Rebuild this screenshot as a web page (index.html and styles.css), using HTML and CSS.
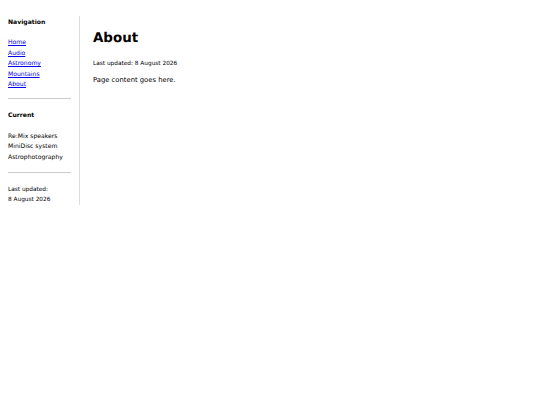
FILE: index.html
```html
<!DOCTYPE html>
<html>
<head>
<meta charset="utf-8">
<link rel="stylesheet" href="styles.css">
</head>
<body>
<div class="layout">
  <aside class="sidebar">
    <h2 class="side-title">Navigation</h2>
    <ul class="nav">
      <li><a href="#">Home</a></li>
      <li><a href="#">Audio</a></li>
      <li><a href="#">Astronomy</a></li>
      <li><a href="#">Mountains</a></li>
      <li><a href="#">About</a></li>
    </ul>
    <hr class="rule rule-first">
    <h2 class="side-title">Current</h2>
    <ul class="current">
      <li>Re:Mix speakers</li>
      <li>MiniDisc system</li>
      <li>Astrophotography</li>
    </ul>
    <hr class="rule rule-second">
    <p class="side-updated">Last updated:<br>8 August 2026</p>
  </aside>
  <main class="main">
    <h1 class="title">About</h1>
    <p class="updated">Last updated: 8 August 2026</p>
    <p class="content">Page content goes here.</p>
  </main>
</div>
</body>
</html>
```
FILE: styles.css
```css
html, body { margin: 0; padding: 0; background: #fff; }
body {
  font-family: "DejaVu Sans", sans-serif;
  color: #000;
  padding: 16px 8px;
  text-rendering: geometricPrecision;
}
.layout { display: flex; align-items: flex-start; }
.sidebar {
  width: 63px;
  padding-right: 8px;
  border-right: 1px solid #ddd;
}
.side-title {
  font-size: 6.1px;
  font-weight: bold;
  margin: 0;
  padding-top: 2px;
  line-height: 10px;
}
.nav, .current {
  list-style: none;
  margin: 10px 0 0;
  padding: 0;
  font-size: 6.1px;
  line-height: 10.5px;
}
.current { margin-top: 11px; }
.nav a { color: #00e; }
.rule {
  border: 0;
  border-top: 1px solid #ccc;
}
.rule-first { margin: 7px 0 10px; }
.rule-second { margin: 9px 0 12px; }
.side-updated {
  font-size: 5.8px;
  line-height: 10px;
  margin: 0;
}
.main { padding-left: 13px; }
.title {
  font-size: 13.4px;
  font-weight: bold;
  margin: 13px 0 0;
  line-height: 20px;
}
.updated { font-size: 5.8px; margin: 12px 0 0; }
.content { font-size: 6.8px; margin: 9px 0 0; }
```
